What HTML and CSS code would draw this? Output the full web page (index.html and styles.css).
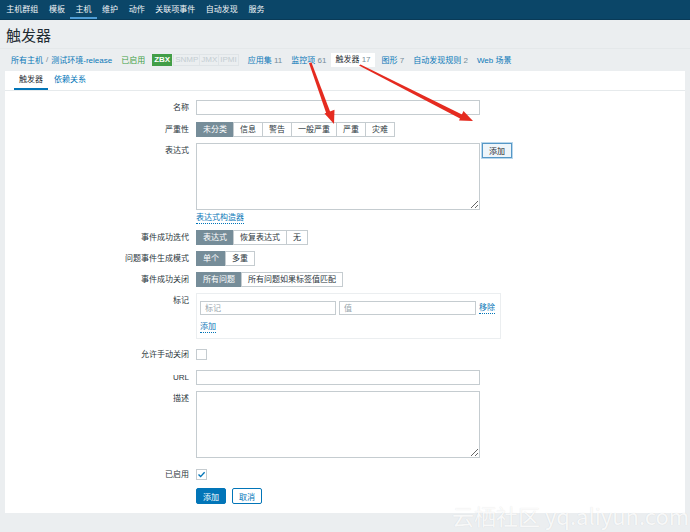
FILE: index.html
```html
<!DOCTYPE html>
<html lang="zh-CN">
<head>
    <meta charset="UTF-8">
    <title>触发器</title>
    <link rel="stylesheet" href="styles.css">
</head>
<body>
    <div class="topnav">
        <span class="nav-item">主机群组</span>
        <span class="nav-item">模板</span>
        <span class="nav-item active">主机</span>
        <span class="nav-item">维护</span>
        <span class="nav-item">动作</span>
        <span class="nav-item">关联项事件</span>
        <span class="nav-item">自动发现</span>
        <span class="nav-item">服务</span>
    </div>

    <div class="header">
        <h1>触发器</h1>
    </div>

    <div class="crumbs">
        <a class="link">所有主机</a>
        <span class="sep">/</span>
        <a class="link">测试环境-release</a>
        <span class="status">已启用</span>
        <span class="badges">
            <span class="badge on">ZBX</span><span class="badge">SNMP</span><span class="badge">JMX</span><span class="badge">IPMI</span>
        </span>
        <a class="link crumb">应用集 <em>11</em></a>
        <a class="link crumb">监控项 <em>61</em></a>
        <span class="crumb current">触发器 <em>17</em></span>
        <a class="link crumb">图形 <em>7</em></a>
        <a class="link crumb">自动发现规则 <em>2</em></a>
        <a class="link crumb">Web 场景</a>
    </div>

    <div class="panel">
        <div class="tabs">
            <span class="tab active">触发器</span>
            <span class="tab">依赖关系</span>
        </div>

        <div class="form">
            <div class="row r-name">
                <label>名称</label>
                <input type="text" class="field">
            </div>
            <div class="row r-sev">
                <label>严重性</label>
                <div class="seg">
                    <span class="sel">未分类</span><span>信息</span><span>警告</span><span>一般严重</span><span>严重</span><span>灾难</span>
                </div>
            </div>
            <div class="row r-expr">
                <label>表达式</label>
                <textarea class="area"></textarea>
                <button class="btn-add">添加</button>
            </div>
            <div class="row r-link">
                <label></label>
                <a class="link dotted">表达式构造器</a>
            </div>
            <div class="row">
                <label>事件成功迭代</label>
                <div class="seg">
                    <span class="sel">表达式</span><span>恢复表达式</span><span>无</span>
                </div>
            </div>
            <div class="row">
                <label>问题事件生成模式</label>
                <div class="seg">
                    <span class="sel">单个</span><span>多重</span>
                </div>
            </div>
            <div class="row">
                <label>事件成功关闭</label>
                <div class="seg">
                    <span class="sel">所有问题</span><span>所有问题如果标签值匹配</span>
                </div>
            </div>
            <div class="row r-tags">
                <label>标记</label>
                <div class="tagbox">
                    <div class="tag-line">
                        <input type="text" class="tag-in" placeholder="标记">
                        <input type="text" class="tag-in val" placeholder="值">
                        <a class="link dotted">移除</a>
                    </div>
                    <a class="link dotted tag-add">添加</a>
                </div>
            </div>
            <div class="row r-check">
                <label>允许手动关闭</label>
                <span class="check"></span>
            </div>
            <div class="row r-url">
                <label>URL</label>
                <input type="text" class="field">
            </div>
            <div class="row r-desc">
                <label>描述</label>
                <textarea class="area"></textarea>
            </div>
            <div class="row r-check r-enabled">
                <label>已启用</label>
                <span class="check checked">
                    <svg width="9" height="9" viewBox="0 0 9 9"><path d="M1.5 4.6 L3.6 6.6 L7.6 2.2" fill="none" stroke="#0275b8" stroke-width="1.4"/></svg>
                </span>
            </div>
            <div class="row r-buttons">
                <label></label>
                <button class="btn primary">添加</button>
                <button class="btn outline">取消</button>
            </div>
        </div>
    </div>

    <div class="watermark">云栖社区 yq.aliyun.com</div>

    <!-- annotation arrows -->
    <svg class="arrows" width="690" height="532" viewBox="0 0 690 532">
        <polygon points="309,63 311.5,62.5 331,114 327,115.5" fill="#e52b20"/>
        <polygon points="334,124 324.5,113.5 334.5,109.8" fill="#e52b20"/>
        <polygon points="359,65.5 360.5,64.5 463,115 461,119" fill="#e52b20"/>
        <polygon points="473,121 459,120.5 463.5,111" fill="#e52b20"/>
    </svg>
</body>
</html>
```

FILE: styles.css
```css
body {
    margin: 0;
    background-color: #ebeef0;
    color: #2b363c;
    font-family: "Liberation Sans", "Noto Sans CJK SC", sans-serif;
    font-size: 8px;
    position: relative;
    width: 690px;
    height: 532px;
    overflow: hidden;
}

a {
    cursor: pointer;
}

.link {
    color: #0a78b8;
}

.dotted {
    border-bottom: 1px dotted #0275b8;
    line-height: 10px;
}

/* top menu */
.topnav {
    height: 19px;
    background-color: #0b4668;
    border-bottom: 1px solid #093a57;
    display: flex;
    align-items: stretch;
    padding-left: 1px;
}

.nav-item {
    color: #f2f5f7;
    padding: 0 5.3px;
    line-height: 19px;
    box-sizing: border-box;
}

.nav-item.active {
    border-bottom: 2px solid #4f9ed6;
}

/* title */
.header {
    height: 28px;
    padding-left: 6px;
}

.header h1 {
    margin: 0;
    padding-top: 7px;
    font-size: 15px;
    line-height: 18px;
    font-weight: normal;
    color: #1f2c33;
}

/* breadcrumbs */
.crumbs {
    height: 21px;
    display: flex;
    align-items: center;
    padding-left: 11px;
    border-top: 1px solid #e4e8ea;
}

.crumbs .sep {
    color: #768d99;
    margin: 0 3px;
}

.crumbs .status {
    color: #429e47;
    margin-left: 9px;
}

.badges {
    display: inline-flex;
    margin-left: 7px;
}

.badge {
    border: 1px solid #dfe4e7;
    color: #c4cdd2;
    padding: 0 1px;
    line-height: 10px;
    margin-left: -1px;
}

.badge.on {
    background-color: #429e47;
    border-color: #429e47;
    color: #fff;
    font-weight: bold;
    margin-left: 0;
    margin-right: 2px;
}

.crumb {
    margin-left: 9px;
}

.crumb em {
    font-style: normal;
    color: #768d99;
}

.crumb.current {
    background-color: #fff;
    color: #1f2c33;
    padding: 0 4px;
    line-height: 14px;
    margin-left: 5px;
    margin-right: -2px;
}

/* panel */
.panel {
    background-color: #fff;
    margin: 1px 5px 0;
    height: 442px;
    box-sizing: border-box;
}

.tabs {
    height: 19px;
    border-bottom: 1px solid #e6eaec;
    display: flex;
    padding-left: 9px;
}

.tab {
    color: #0275b8;
    padding: 0 5px;
    line-height: 18px;
    margin-right: 1px;
}

.tab.active {
    color: #1f2c33;
    border-bottom: 2px solid #0275b8;
}

/* form */
.form {
    padding-top: 9px;
}

.row {
    display: flex;
    align-items: flex-start;
    margin-bottom: 6px;
}

.row label {
    width: 191px;
    flex: none;
    text-align: right;
    padding-right: 7px;
    box-sizing: border-box;
    line-height: 15px;
}

.r-name {
    margin-bottom: 7px;
}

.field {
    width: 284px;
    height: 15px;
    box-sizing: border-box;
    border: 1px solid #c5ccd0;
    margin: 0;
    padding: 0 3px;
    font-size: 8px;
}

.area {
    width: 284px;
    height: 67px;
    box-sizing: border-box;
    border: 1px solid #c5ccd0;
    margin: 0;
    padding: 2px;
    font-size: 8px;
}

.r-expr {
    margin-bottom: 2px;
}

.btn-add {
    margin-left: 2px;
    width: 30px;
    height: 15px;
    padding: 0;
    font-family: inherit;
    font-size: 8px;
    color: #1f2c33;
    background-color: #eef5fa;
    border: 1px solid #5597c6;
    box-shadow: 0 0 0 1px #b9d7ec;
}

.r-link {
    height: 12px;
    align-items: center;
}

/* segmented radio buttons */
.seg {
    display: flex;
}

.seg span {
    border: 1px solid #c5ccd0;
    margin-left: -1px;
    padding: 0 6px;
    height: 15px;
    line-height: 13px;
    box-sizing: border-box;
    background-color: #fff;
}

.seg span:first-child {
    margin-left: 0;
}

.seg .sel {
    background-color: #768d99;
    border-color: #768d99;
    color: #fff;
}

/* tags */
.tagbox {
    width: 305px;
    border: 1px solid #ebeef0;
    box-sizing: border-box;
    padding: 7px 3px 5px;
}

.tag-line {
    display: flex;
    align-items: center;
}

.tag-in {
    width: 136px;
    height: 14px;
    box-sizing: border-box;
    border: 1px solid #c5ccd0;
    margin: 0 3px 0 0;
    padding: 0 4px;
    font-size: 8px;
    font-family: inherit;
}

.tag-in.val {
    width: 137px;
}

.tag-in::placeholder {
    color: #98a6ad;
}

.tag-add {
    display: inline-block;
    margin-top: 7px;
}

/* checkboxes */
.r-check {
    height: 18px;
    align-items: center;
    margin-bottom: 7px;
}

.check {
    width: 11px;
    height: 11px;
    border: 1px solid #c5ccd0;
    box-sizing: border-box;
    display: flex;
    align-items: center;
    justify-content: center;
}

.r-url {
    margin-bottom: 6px;
}

.r-desc {
    margin-bottom: 5px;
}

.r-enabled {
    height: 22px;
    margin-bottom: 3px;
}

/* bottom buttons */
.btn {
    width: 30px;
    height: 16px;
    padding: 0;
    font-family: inherit;
    font-size: 8px;
    margin-right: 6px;
    border-radius: 2px;
}

.btn.primary {
    background-color: #0275b8;
    border: 1px solid #0275b8;
    color: #fff;
}

.btn.outline {
    background-color: #fff;
    border: 1px solid #0275b8;
    color: #0275b8;
}

.watermark {
    position: absolute;
    left: 452px;
    top: 500px;
    font-family: "Noto Sans CJK SC", sans-serif;
    font-size: 22px;
    line-height: 30px;
    color: rgba(255, 255, 255, 0.85);
    text-shadow: 0 0 1px rgba(0, 0, 0, 0.12);
    white-space: nowrap;
}

.arrows {
    position: absolute;
    left: 0;
    top: 0;
    pointer-events: none;
}
```
